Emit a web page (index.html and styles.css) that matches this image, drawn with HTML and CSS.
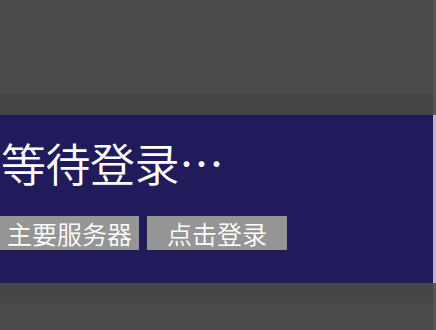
FILE: index.html
```html
<!DOCTYPE html>
<html lang="zh">
<head>
<meta charset="utf-8">
<link rel="stylesheet" href="styles.css">
</head>
<body>
<div class="screen">
  <div class="panel top">
    <div class="ghost ghost-a"></div>
    <div class="ghost ghost-b"></div>
  </div>
  <div class="gap"></div>
  <div class="banner">
    <h1 class="title">等待登录…</h1>
    <div class="actions">
      <button class="btn btn-server">主要服务器</button>
      <button class="btn btn-login">点击登录</button>
    </div>
  </div>
  <div class="gap gap-bottom"></div>
  <div class="panel bottom"></div>
</div>
</body>
</html>
```
FILE: styles.css
```css
html, body {
  margin: 0;
  padding: 0;
  background: #474747;
  font-family: "Noto Sans CJK SC", "Noto Sans", sans-serif;
}
.screen {
  width: 436px;
  height: 330px;
  display: flex;
  flex-direction: column;
  overflow: hidden;
}
.panel {
  background: #4b4b4b;
  border-right: 3px solid #575757;
}
.top {
  height: 94px;
  position: relative;
}
.ghost {
  position: absolute;
  border-left: 1px solid #484848;
}
.ghost-a { left: 50px; top: 12px; height: 48px; border-color: #4a4747; }
.ghost-b { left: 178px; top: 16px; height: 40px; }
.gap {
  height: 21px;
  background: #454545;
  border-right: 3px solid #555;
}
.gap-bottom { height: 20px; }
.banner {
  height: 168px;
  background: #211a5b;
  border-right: 3px solid #b9b4dc;
  box-sizing: border-box;
  padding-top: 18px;
  display: flex;
  flex-direction: column;
}
.title {
  margin: 0 0 0 1px;
  color: #ffffff;
  font-weight: 350;
  font-size: 45px;
  line-height: 60px;
  letter-spacing: -0.5px;
}
.actions {
  display: flex;
  gap: 8px;
  margin-top: 23px;
}
.btn {
  height: 34px;
  border: 0;
  padding: 0;
  background: #959595;
  color: #ffffff;
  font-family: "Noto Sans CJK SC", "Noto Sans", sans-serif;
  font-weight: 350;
  font-size: 25px;
  line-height: 34px;
}
.btn-server { width: 139px; }
.btn-login { width: 140px; }
.bottom {
  flex: 1;
}
```
